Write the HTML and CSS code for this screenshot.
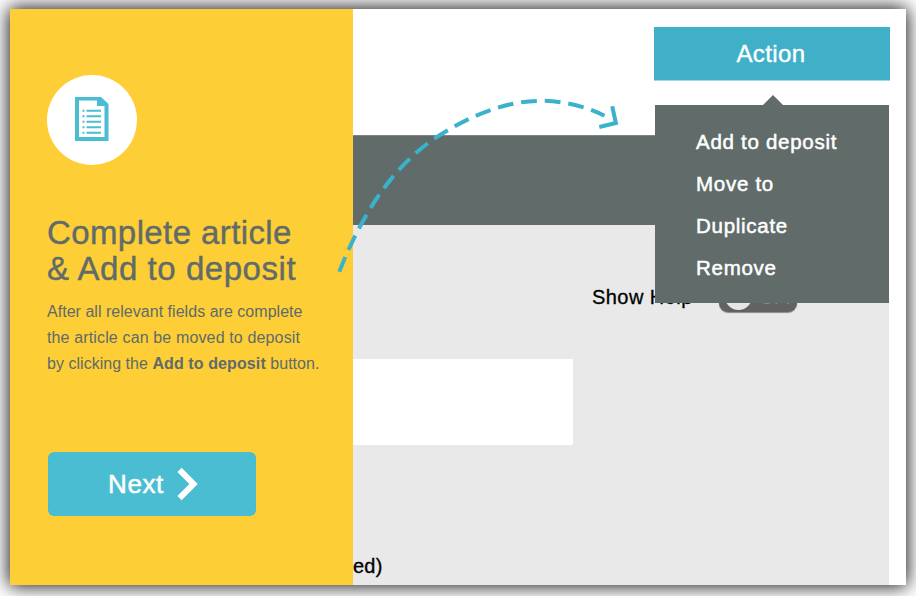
FILE: index.html
```html
<!DOCTYPE html>
<html lang="en">
<head>
<meta charset="utf-8">
<title>Complete article</title>
<link rel="stylesheet" href="styles.css">
</head>
<body>
<div class="card">
  <aside class="guide">
    <div class="badge">
      <svg width="34" height="44" viewBox="0 0 34 44">
        <path fill="#4abdd3" fill-rule="evenodd" d="M0 0H26L33.5 7V44H0ZM4 3.5V40H29.5V9H22V3.5Z"/>
        <path stroke="#4abdd3" stroke-width="2" d="M7.5 13.7h2M11.500 13.700H26M7.500 19.200h2M11.500 19.200H26M7.500 24.700h2M11.500 24.700H26M7.500 30.200h2M11.500 30.200H26M7.500 35.700h2M11.500 35.700H26"/>
      </svg>
    </div>
    <h1 class="title"><span class="line">Complete article</span><br>&amp; Add to deposit</h1>
    <p class="copy">After all relevant fields are complete<br><span class="line">the article can be moved to deposit</span><br>by clicking the <b>Add to deposit</b> button.</p>
    <button class="next">
      <span>Next</span>
      <svg width="22" height="34" viewBox="0 0 22 34"><path d="M2.500 2.800L16.500 17L2.500 31.200" fill="none" stroke="#fff" stroke-width="6"/></svg>
    </button>
  </aside>
  <main class="app">
    <header class="top"><button class="action">Action</button></header>
    <div class="bar"></div>
    <section class="content">
      <div class="help"><span>Show Help</span><span class="toggle"><i class="knob"></i><span class="off">OFF</span></span></div>
      <div class="field"></div>
      <div class="label">ed)</div>
    </section>
  </main>
  <ul class="menu">
    <li>Add to deposit</li>
    <li>Move to</li>
    <li>Duplicate</li>
    <li>Remove</li>
  </ul>
  <svg class="arrow" width="300" height="190" viewBox="330 90 300 190" fill="none" stroke="#3ab2cb" stroke-width="4">
    <path stroke-dasharray="15.800 7.900" d="M339.300 271.700C362 214 394 163 442 133.700C474 114 507 101 541 100.800C563 100.800 585 106 604.500 115.700"/>
    <path d="M612.200 106.300L615.900 123L599.300 127"/>
  </svg>
</div>
</body>
</html>
```
FILE: styles.css
```css
* { box-sizing: border-box; margin: 0; padding: 0; }
body {
  width: 916px; height: 596px; padding: 9px 10px 11px; overflow: hidden;
  background: #fff; font-family: "Liberation Sans", Arial, sans-serif;
}
button { border: 0; color: #fff; font-family: inherit; }
.card {
  position: relative; display: flex; width: 896px; height: 576px;
  background: #fff; box-shadow: 0 0 18px 1px rgba(0, 0, 0, .95);
}
.guide { width: 343px; padding: 66px 0 0 37px; background: #fece36; color: #606b6a; }
.badge {
  display: flex; align-items: center; justify-content: center;
  width: 90px; height: 90px; border-radius: 50%; background: #fff;
}
.badge svg { margin-top: -2px; }
.title {
  margin-top: 50px; font-size: 33px; line-height: 36px; font-weight: 400;
  letter-spacing: .55px; white-space: nowrap; -webkit-text-stroke: .4px #606b6a;
}
.title .line { letter-spacing: .4px; }
.copy { margin-top: 12px; font-size: 16px; line-height: 26px; white-space: nowrap; letter-spacing: .03px; }
.copy .line { letter-spacing: .14px; }
.copy b { letter-spacing: .1px; }
.next {
  display: flex; align-items: center; width: 208px; height: 64px;
  margin: 75px 0 0 1px; padding-left: 60px; border-radius: 6px;
  background: #4abdd3; font-size: 26px; letter-spacing: .6px; -webkit-text-stroke: .5px #fff;
}
.next svg { margin-left: 13px; }
.app { flex: 1; display: flex; flex-direction: column; }
.top { height: 126px; padding: 18px 16px 0 0; display: flex; justify-content: flex-end; align-items: flex-start; }
.action {
  width: 236px; height: 54px; padding-right: 2px; background: #40b0c9; border-bottom: 1px solid #9fd7e4;
  font-size: 24px; letter-spacing: .4px; -webkit-text-stroke: .4px #fff;
}
.bar { width: 536px; height: 90px; background: #606b6a; border-top: 1px solid #7d8685; }
.content { width: 536px; flex: 1; background: #e9e9e9; color: #000; font-size: 20px; -webkit-text-stroke: .3px #000; }
.help { display: flex; align-items: center; height: 134px; padding: 10px 0 0 239px; letter-spacing: .45px; }
.help > span:first-child { width: 127px; }
.toggle {
  display: flex; align-items: center; width: 78px; height: 32px; margin-top: -2px; padding-left: 6px;
  border-radius: 9px; background: #626262; box-shadow: 0 1px 1px #888;
}
.knob { width: 27px; height: 27px; border-radius: 50%; background: #e6e6e6; }
.off { margin: 5px 0 0 8px; font-size: 18px; color: #8b8b8b; -webkit-text-stroke: 0; }
.field { width: 220px; height: 86px; background: #fff; }
.label { margin-top: 110px; line-height: 23px; letter-spacing: .2px; }
.menu {
  position: absolute; left: 645px; top: 96px; width: 234px; height: 198px;
  padding: 16px 0 0 41px; list-style: none; background: #606b6a; color: #fff;
  font-size: 20.5px; line-height: 42px; letter-spacing: .72px; -webkit-text-stroke: .5px #fff;
}
.menu::before {
  content: ""; position: absolute; left: 108px; top: -10px;
  border: solid transparent; border-width: 0 10px 10px; border-bottom-color: #606b6a;
}
.arrow { position: absolute; left: 320px; top: 81px; }
```
